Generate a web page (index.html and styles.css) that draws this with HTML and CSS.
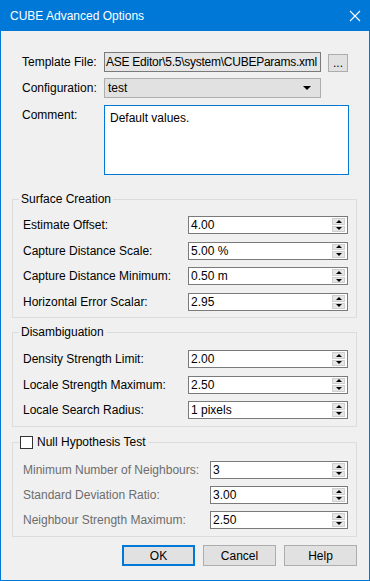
FILE: index.html
```html
<!DOCTYPE html>
<html lang="en">
<head>
  <meta charset="UTF-8">
  <title>CUBE Advanced Options</title>
  <link rel="stylesheet" href="styles.css">
</head>
<body>
  <div class="dialog">
    <div class="titlebar">
      <span class="title">CUBE Advanced Options</span>
      <svg class="close" width="12" height="12" viewBox="0 0 12 12">
        <path d="M1 1 L11 11 M11 1 L1 11" stroke="#fff" stroke-width="1.1" fill="none"/>
      </svg>
    </div>

    <div class="client">
      <div class="top-form">
        <label class="top-label">Template File:</label>
        <div class="file-row">
          <div class="field readonly"><span>ASE Editor\5.5\system\CUBEParams.xml</span></div>
          <button class="browse">...</button>
        </div>

        <label class="top-label">Configuration:</label>
        <div class="combo">
          <span>test</span>
          <i class="combo-arrow"></i>
        </div>

        <label class="top-label comment-label">Comment:</label>
        <div class="memo">Default values.</div>
      </div>

      <!-- Surface Creation -->
      <fieldset class="group surface">
        <legend>Surface Creation</legend>
        <div class="param">
          <span>Estimate Offset:</span>
          <div class="spin"><span class="value">4.00</span><div class="spin-btns"><i class="up"></i><i class="down"></i></div></div>
        </div>
        <div class="param">
          <span>Capture Distance Scale:</span>
          <div class="spin"><span class="value">5.00 %</span><div class="spin-btns"><i class="up"></i><i class="down"></i></div></div>
        </div>
        <div class="param">
          <span>Capture Distance Minimum:</span>
          <div class="spin"><span class="value">0.50 m</span><div class="spin-btns"><i class="up"></i><i class="down"></i></div></div>
        </div>
        <div class="param">
          <span>Horizontal Error Scalar:</span>
          <div class="spin"><span class="value">2.95</span><div class="spin-btns"><i class="up"></i><i class="down"></i></div></div>
        </div>
      </fieldset>

      <!-- Disambiguation -->
      <fieldset class="group disamb">
        <legend>Disambiguation</legend>
        <div class="param">
          <span>Density Strength Limit:</span>
          <div class="spin"><span class="value">2.00</span><div class="spin-btns"><i class="up"></i><i class="down"></i></div></div>
        </div>
        <div class="param">
          <span>Locale Strength Maximum:</span>
          <div class="spin"><span class="value">2.50</span><div class="spin-btns"><i class="up"></i><i class="down"></i></div></div>
        </div>
        <div class="param">
          <span>Locale Search Radius:</span>
          <div class="spin"><span class="value">1 pixels</span><div class="spin-btns"><i class="up"></i><i class="down"></i></div></div>
        </div>
      </fieldset>

      <!-- Null Hypothesis Test -->
      <fieldset class="group null-test">
        <legend><i class="check"></i>Null Hypothesis Test</legend>
        <div class="param disabled">
          <span>Minimum Number of Neighbours:</span>
          <div class="spin narrow"><span class="value">3</span><div class="spin-btns"><i class="up"></i><i class="down"></i></div></div>
        </div>
        <div class="param disabled">
          <span>Standard Deviation Ratio:</span>
          <div class="spin narrow"><span class="value">3.00</span><div class="spin-btns"><i class="up"></i><i class="down"></i></div></div>
        </div>
        <div class="param disabled">
          <span>Neighbour Strength Maximum:</span>
          <div class="spin narrow"><span class="value">2.50</span><div class="spin-btns"><i class="up"></i><i class="down"></i></div></div>
        </div>
      </fieldset>

      <div class="buttons">
        <button class="btn default">OK</button>
        <button class="btn">Cancel</button>
        <button class="btn">Help</button>
      </div>
    </div>
  </div>
</body>
</html>
```

FILE: styles.css
```css
/* Base */
body {
  margin: 0;
  font-family: "Liberation Sans", Arial, sans-serif;
  font-size: 12px;
  color: #000;
  background: #f0f0f0;
}

.dialog {
  width: 370px;
  height: 581px;
  display: flex;
  flex-direction: column;
}

/* Title bar */
.titlebar {
  flex: none;
  height: 31px;
  background: #0078d7;
  color: #fff;
  display: flex;
  align-items: center;
  justify-content: space-between;
  padding: 0 10px 0 10px;
}

.close {
  margin-right: -1px;
}

/* Client area */
.client {
  flex: 1;
  background: #f0f0f0;
  border: 1px solid #0078d7;
  border-top: 0;
  padding: 21px 12px 0 11px;
  display: flex;
  flex-direction: column;
}

/* Top fields */
.top-form {
  display: grid;
  grid-template-columns: 82px 1fr;
  row-gap: 6px;
  padding: 0 8px 0 10px;
  align-items: center;
}

.file-row {
  display: flex;
  align-items: center;
  gap: 7px;
}

.field {
  box-sizing: border-box;
  width: 217px;
  height: 20px;
  border: 1px solid #7a7a7a;
  display: flex;
  align-items: center;
  justify-content: flex-end;
  overflow: hidden;
  white-space: nowrap;
  padding-right: 3px;
  letter-spacing: -0.25px;
}

.readonly {
  background: #e5e5e5;
  color: #000;
}

.browse {
  box-sizing: border-box;
  width: 20px;
  height: 18px;
  margin-top: 1px;
  padding: 0;
  border: 1px solid #adadad;
  background: #e1e1e1;
  font: inherit;
  line-height: 10px;
  color: #000;
}

.combo {
  box-sizing: border-box;
  width: 217px;
  height: 20px;
  border: 1px solid #adadad;
  background: #e1e1e1;
  display: flex;
  align-items: center;
  justify-content: space-between;
  padding: 0 9px 0 3px;
}

.combo-arrow {
  width: 0;
  height: 0;
  border-left: 4px solid transparent;
  border-right: 4px solid transparent;
  border-top: 4px solid #000;
}

.comment-label {
  align-self: start;
  padding-top: 4px;
}

.memo {
  box-sizing: border-box;
  height: 70px;
  margin-top: 1px;
  border: 1px solid #0078d7;
  background: #fff;
  padding: 5px 5px;
}

/* Group boxes */
.group {
  margin: 0;
  border: 1px solid #dcdcdc;
  padding: 9px 8px 6px 10px;
  min-width: 0;
}

.group legend {
  padding: 0 2px;
  margin-left: -4px;
  line-height: 16px;
}

.surface {
  margin-top: 16px;
}

.disamb {
  margin-top: 6px;
  padding-top: 10px;
  padding-bottom: 7px;
}

.null-test {
  margin-top: 7px;
  padding-top: 11px;
  padding-bottom: 7px;
}

.null-test legend {
  display: flex;
  align-items: center;
  margin-left: -3px;
  padding-left: 0;
}

.check {
  box-sizing: border-box;
  width: 13px;
  height: 13px;
  border: 1px solid #333;
  background: #fff;
  margin-right: 4px;
}

.param {
  display: flex;
  align-items: center;
  justify-content: space-between;
  height: 18px;
}

.param + .param {
  margin-top: 7.7px;
}

.disamb .param + .param {
  margin-top: 7.5px;
}

.null-test .param + .param {
  margin-top: 7px;
}

.param.disabled > span {
  color: #6d6d6d;
}

/* Spin boxes */
.spin {
  box-sizing: border-box;
  width: 160px;
  height: 18px;
  border: 1px solid #7a7a7a;
  background: #fff;
  display: flex;
  align-items: center;
  padding-left: 2px;
}

.spin.narrow {
  width: 138px;
}

.spin-btns {
  margin-left: auto;
  margin-right: 2px;
  width: 13px;
  height: 14px;
  display: flex;
  flex-direction: column;
  gap: 1px;
}

.spin-btns i {
  flex: 1;
  background: #e6e6e6;
  border: 1px solid #cfcfcf;
  display: flex;
  align-items: center;
  justify-content: center;
}

.spin-btns i::before {
  content: "";
  width: 0;
  height: 0;
  border-left: 3px solid transparent;
  border-right: 3px solid transparent;
}

.spin-btns .up::before {
  border-bottom: 3px solid #000;
}

.spin-btns .down::before {
  border-top: 3px solid #000;
}

/* Bottom buttons */
.buttons {
  display: flex;
  justify-content: flex-end;
  gap: 8px;
  margin-top: 8px;
}

.btn {
  box-sizing: border-box;
  width: 73px;
  height: 21px;
  border: 1px solid #adadad;
  background: #e1e1e1;
  font: inherit;
  color: #000;
  padding: 0;
}

.btn.default {
  border: 2px solid #0078d7;
}
```
